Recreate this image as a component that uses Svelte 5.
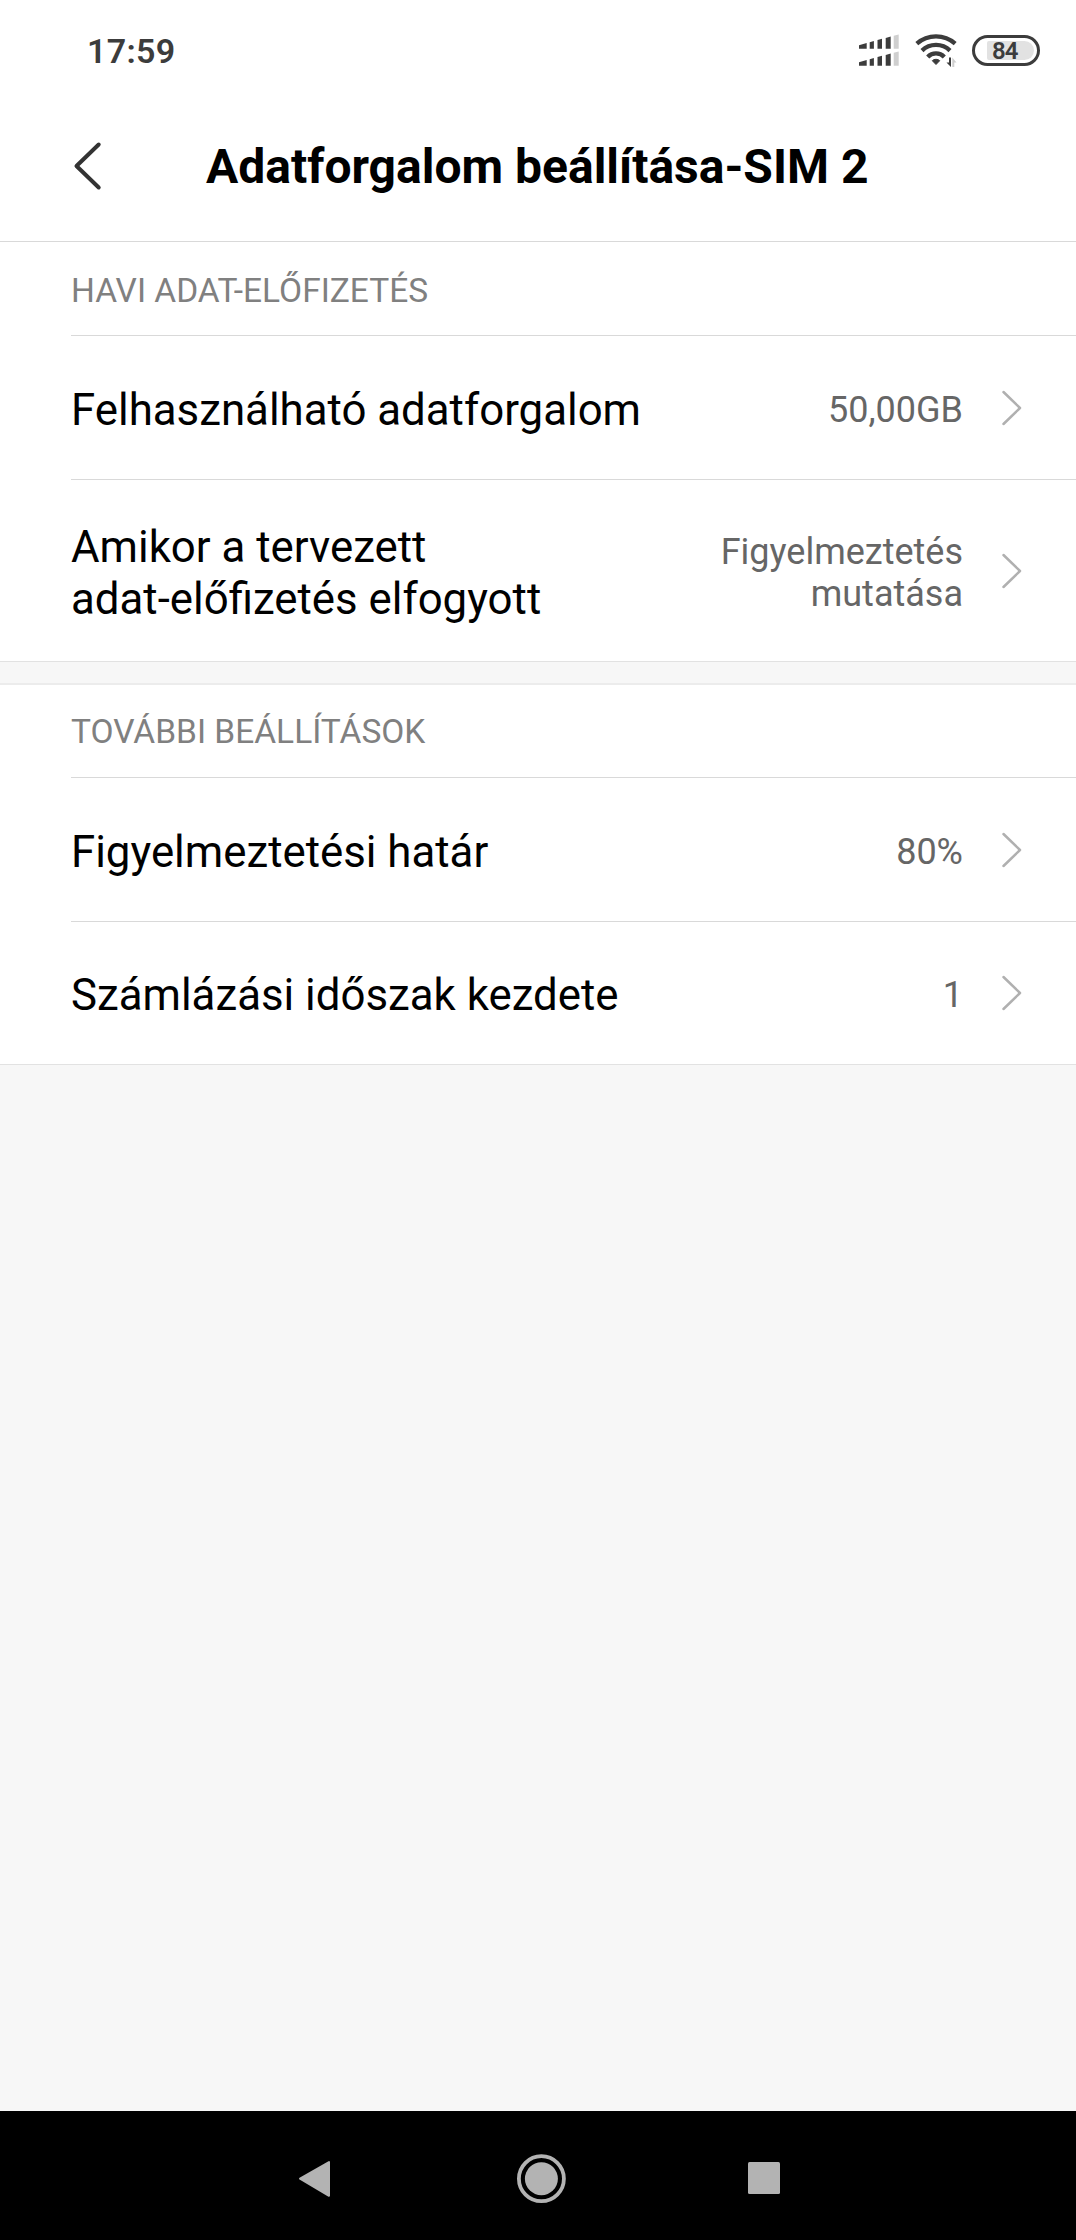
<script lang="ts">
  type Item = { title: string[]; value: string[]; tall?: boolean };
  type Section = { heading: string; items: Item[] };

  const sections: Section[] = [
    {
      heading: 'HAVI ADAT-ELŐFIZETÉS',
      items: [
        { title: ['Felhasználható adatforgalom'], value: ['50,00GB'] },
        {
          title: ['Amikor a tervezett', 'adat-előfizetés elfogyott'],
          value: ['Figyelmeztetés', 'mutatása'],
          tall: true,
        },
      ],
    },
    {
      heading: 'TOVÁBBI BEÁLLÍTÁSOK',
      items: [
        { title: ['Figyelmeztetési határ'], value: ['80%'] },
        { title: ['Számlázási időszak kezdete'], value: ['1'] },
      ],
    },
  ];
</script>

<div class="screen">
  <div class="status-bar">
    <span class="time">17:59</span>
    <div class="status-icons">
      <svg class="signal" width="42" height="34" viewBox="0 0 42 34">
        {#each [0, 17] as y (y)}
          <g transform="translate(0 {y})" fill="#3c3c3c">
            <path d="M1 12.200L8.700 10v5.700H1z" />
            <path d="M11.700 9.200L15.900 8v7.700H11.700z" />
            <path d="M19.500 7L24 5.800v9.900H19.500z" />
            <path d="M27.700 5L32.700 3.600v12.100H27.700z" />
            <path d="M35.700 2.800L40.700 1.400v14.300H35.700z" fill="#cfcfcf" />
          </g>
        {/each}
      </svg>
      <svg class="wifi" width="44" height="36" viewBox="0 0 44 36">
        <g fill="none" stroke="#3c3c3c" stroke-width="4.300">
          <path d="M2.800 11.700A29 29 0 0 1 41.200 11.700" />
          <path d="M8 18.600A20 20 0 0 1 36 18.600" />
          <path d="M13.700 25A11.500 11.500 0 0 1 30.300 25" />
        </g>
        <path d="M18.300 28.700A5.500 5.500 0 0 1 25.700 28.700L22 32.500z" fill="#3c3c3c" stroke="#3c3c3c" stroke-linejoin="round" />
        <path d="M32.500 30.500H35V25.500H37V35z" fill="#3c3c3c" />
        <path d="M38.300 35V25.500L42.500 30.500H40.300V35z" fill="#cfcfcf" />
      </svg>
      <div class="battery"><span class="battery-level">84</span></div>
    </div>
  </div>

  <header class="app-bar">
    <svg class="back" width="30" height="52" viewBox="0 0 30 52">
      <path d="M25.700 4.500L3.500 26L25.700 47.500" />
    </svg>
    <h1>Adatforgalom beállítása-SIM 2</h1>
  </header>

  <main>
    {#each sections as section (section.heading)}
      <section>
        <h2>{section.heading}</h2>
        {#each section.items as item (item.title[0])}
          <div class="row" class:row--tall={item.tall}>
            <div class="row-title">
              {#each item.title as line}<span>{line}</span>{/each}
            </div>
            <div class="row-value">
              {#each item.value as line}<span>{line}</span>{/each}
            </div>
            <svg class="chevron" width="20" height="36" viewBox="0 0 20 36">
              <path d="M1.500 2L18 18L1.500 34" />
            </svg>
          </div>
        {/each}
      </section>
    {/each}
  </main>

  <nav>
    <svg width="1076" height="129" viewBox="0 0 1076 129" fill="#b3b3b3">
      <path
        d="M300 67.700L329 51V84.800z"
        stroke="#b3b3b3"
        stroke-width="2"
        stroke-linejoin="round"
      />
      <circle cx="541.400" cy="67.700" r="22.500" fill="none" stroke="#b3b3b3" stroke-width="3.800" />
      <circle cx="541.400" cy="67.700" r="16.500" />
      <rect x="748" y="51" width="32" height="32" rx="1.500" />
    </svg>
  </nav>
</div>

<style>
  :global(body) {
    background: #f7f7f7;
  }

  .screen {
    display: flex;
    flex-direction: column;
    width: 1076px;
    height: 2240px;
    font-family: Roboto, sans-serif;
    color: #000;
    background: #f7f7f7;
  }

  .status-bar {
    display: flex;
    align-items: center;
    justify-content: space-between;
    height: 100px;
    padding: 0 36px 0 87px;
    box-sizing: border-box;
    background: #fff;
  }

  .time {
    font-size: 34px;
    font-weight: 600;
    letter-spacing: 0.3px;
    line-height: 40px;
    padding-top: 2px;
    color: #3c3c3c;
  }

  .status-icons {
    display: flex;
    align-items: center;
  }

  .wifi {
    margin-left: 14px;
  }

  .battery {
    display: flex;
    width: 68px;
    height: 31px;
    margin-left: 14px;
    padding: 3px;
    border: 3px solid #3c3c3c;
    border-radius: 16px;
    box-sizing: border-box;
  }

  .battery-level {
    flex: 1;
    margin-left: 9px;
    padding-left: 5px;
    border-radius: 2px 10px 10px 2px;
    background: #e2e2e2;
    color: #3c3c3c;
    font-size: 24px;
    font-weight: 600;
    letter-spacing: -1px;
    line-height: 20px;
  }

  .app-bar {
    display: flex;
    align-items: center;
    height: 142px;
    padding: 0 73px 10px;
    box-sizing: border-box;
    border-bottom: 1px solid #d9d9d9;
    background: #fff;
  }

  .back path {
    fill: none;
    stroke: #333;
    stroke-width: 4;
    stroke-linecap: round;
    stroke-linejoin: round;
  }

  h1 {
    margin: 0 0 0 103px;
    padding-top: 3px;
    font-size: 48px;
    font-weight: 700;
    line-height: 56px;
    white-space: nowrap;
  }

  section {
    background: #fff;
    border-bottom: 1px solid #e2e2e2;
  }

  section + section {
    margin-top: 21px;
    border-top: 2px solid #ececec;
  }

  h2 {
    height: 93px;
    margin: 0 0 0 71px;
    padding-top: 29px;
    box-sizing: border-box;
    font-size: 33.5px;
    font-weight: 400;
    line-height: 40px;
    color: #808080;
  }

  section + section h2 {
    height: 92px;
    padding-top: 27px;
  }

  .row {
    display: flex;
    align-items: center;
    height: 144px;
    margin-left: 71px;
    padding-right: 53px;
    box-sizing: border-box;
    border-top: 1px solid #d9d9d9;
  }

  .row + .row {
    height: 143px;
  }

  .row + .row--tall {
    height: 182px;
  }

  .row-title,
  .row-value {
    display: flex;
    flex-direction: column;
    white-space: nowrap;
  }

  .row-title {
    flex: 1;
    padding-top: 4px;
    font-size: 43.8px;
    line-height: 52px;
  }

  .row--tall .row-title {
    padding-top: 5px;
  }

  .row-value {
    padding-top: 4px;
    font-size: 36px;
    line-height: 42px;
    text-align: right;
    color: #666;
  }

  .chevron {
    margin-left: 39px;
    margin-right: 1px;
  }

  .chevron path {
    fill: none;
    stroke: #b0b0b0;
    stroke-width: 2.5;
    stroke-linecap: round;
    stroke-linejoin: round;
  }

  nav {
    height: 129px;
    margin-top: auto;
    background: #000;
  }

  nav svg {
    display: block;
  }
</style>
